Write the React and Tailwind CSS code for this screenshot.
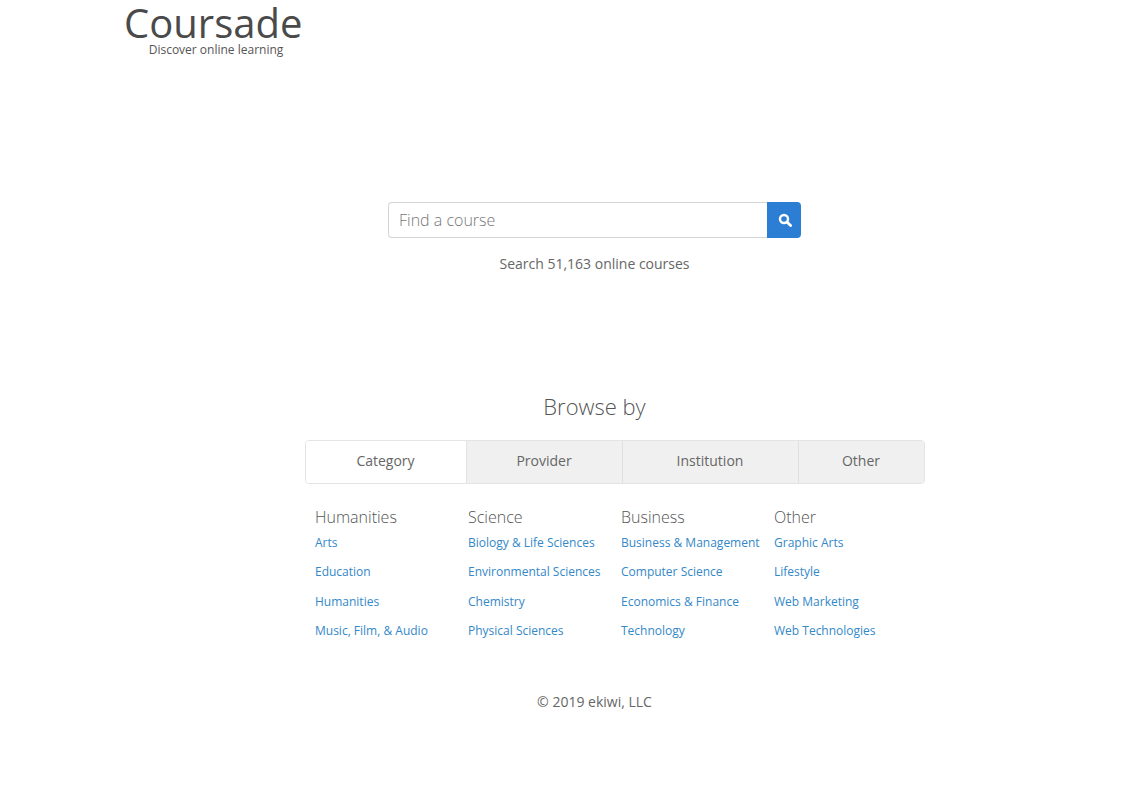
const tabs = [
  { label: "Category", width: "w-[161px]", active: true },
  { label: "Provider", width: "w-[156px]" },
  { label: "Institution", width: "w-[176px]" },
  { label: "Other", width: "flex-1" },
];

const columns = [
  { title: "Humanities", links: ["Arts", "Education", "Humanities", "Music, Film, & Audio"] },
  { title: "Science", links: ["Biology & Life Sciences", "Environmental Sciences", "Chemistry", "Physical Sciences"] },
  { title: "Business", links: ["Business & Management", "Computer Science", "Economics & Finance", "Technology"] },
  { title: "Other", links: ["Graphic Arts", "Lifestyle", "Web Marketing", "Web Technologies"] },
];

function SearchIcon() {
  return (
    <svg width="14" height="14" viewBox="0 0 14 14" fill="none" stroke="currentColor">
      <circle cx="6" cy="6" r="4" strokeWidth="2.4" />
      <path d="M9.2 9.2l3.4 3.4" strokeWidth="2.8" strokeLinecap="round" />
    </svg>
  );
}

export default function App() {
  return (
    <div className="min-h-[792px] bg-white font-['Open_Sans',sans-serif] text-[#666]">
      {/* Logo */}
      <header className="pl-[124px] pt-[2px] h-[59px]">
        <div className="w-[178px] text-center">
          <div className="text-[40px] leading-[42px] text-[#4a4a4a] whitespace-nowrap">Coursade</div>
          <div className="text-[12px] leading-[12px] text-[#555] whitespace-nowrap pl-[6px]">Discover online learning</div>
        </div>
      </header>

      {/* Search */}
      <section className="ml-[388px] w-[413px] mt-[143px]">
        <div className="flex h-[36px]">
          <input
            placeholder="Find a course"
            className="flex-1 min-w-0 border border-[#d5d5d5] border-r-0 rounded-l-[4px] px-[10px] text-[16px] font-light text-[#555] placeholder:text-[#777] outline-none"
          />
          <button className="w-[34px] pl-[1px] bg-[#2b7ed4] rounded-r-[4px] flex items-center justify-center text-white">
            <SearchIcon />
          </button>
        </div>
        <p className="text-center text-[14px] leading-[20px] mt-[16px]">Search 51,163 online courses</p>
      </section>

      {/* Browse */}
      <section className="ml-[305px] w-[620px] mt-[117px]">
        <h2 className="w-[579px] text-center text-[22px] leading-[30px] font-light text-[#555]">Browse by</h2>
        <div className="flex h-[44px] mt-[19px] border border-[#e4e4e4] rounded-[4px] overflow-hidden text-[14px] text-[#666]">
          {tabs.map((tab) => (
            <div
              key={tab.label}
              className={
                tab.active
                  ? `${tab.width} flex items-center justify-center pb-[3px] pr-[1px] bg-white border-r border-[#e4e4e4]`
                  : `${tab.width} flex items-center justify-center pb-[3px] pr-[1px] bg-[#f0f0f0] border-r border-[#e0e0e0] last:border-r-0`
              }
            >
              {tab.label}
            </div>
          ))}
        </div>

        <div className="grid grid-cols-[153px_153px_153px_153px] pl-[10px] mt-[21px]">
          {columns.map((col) => (
            <div key={col.title}>
              <h3 className="text-[16px] leading-[24px] font-light text-[#555] whitespace-nowrap">{col.title}</h3>
              <ul className="flex flex-col mt-[5px]">
                {col.links.map((link) => (
                  <li key={link} className="h-[29.4px] text-[12px] leading-[17px] text-[#3388c8] whitespace-nowrap">
                    <a href="#">{link}</a>
                  </li>
                ))}
              </ul>
            </div>
          ))}
        </div>

        <p className="w-[579px] text-center text-[14px] leading-[20px] mt-[40px]">© 2019 ekiwi, LLC</p>
      </section>
    </div>
  );
}
